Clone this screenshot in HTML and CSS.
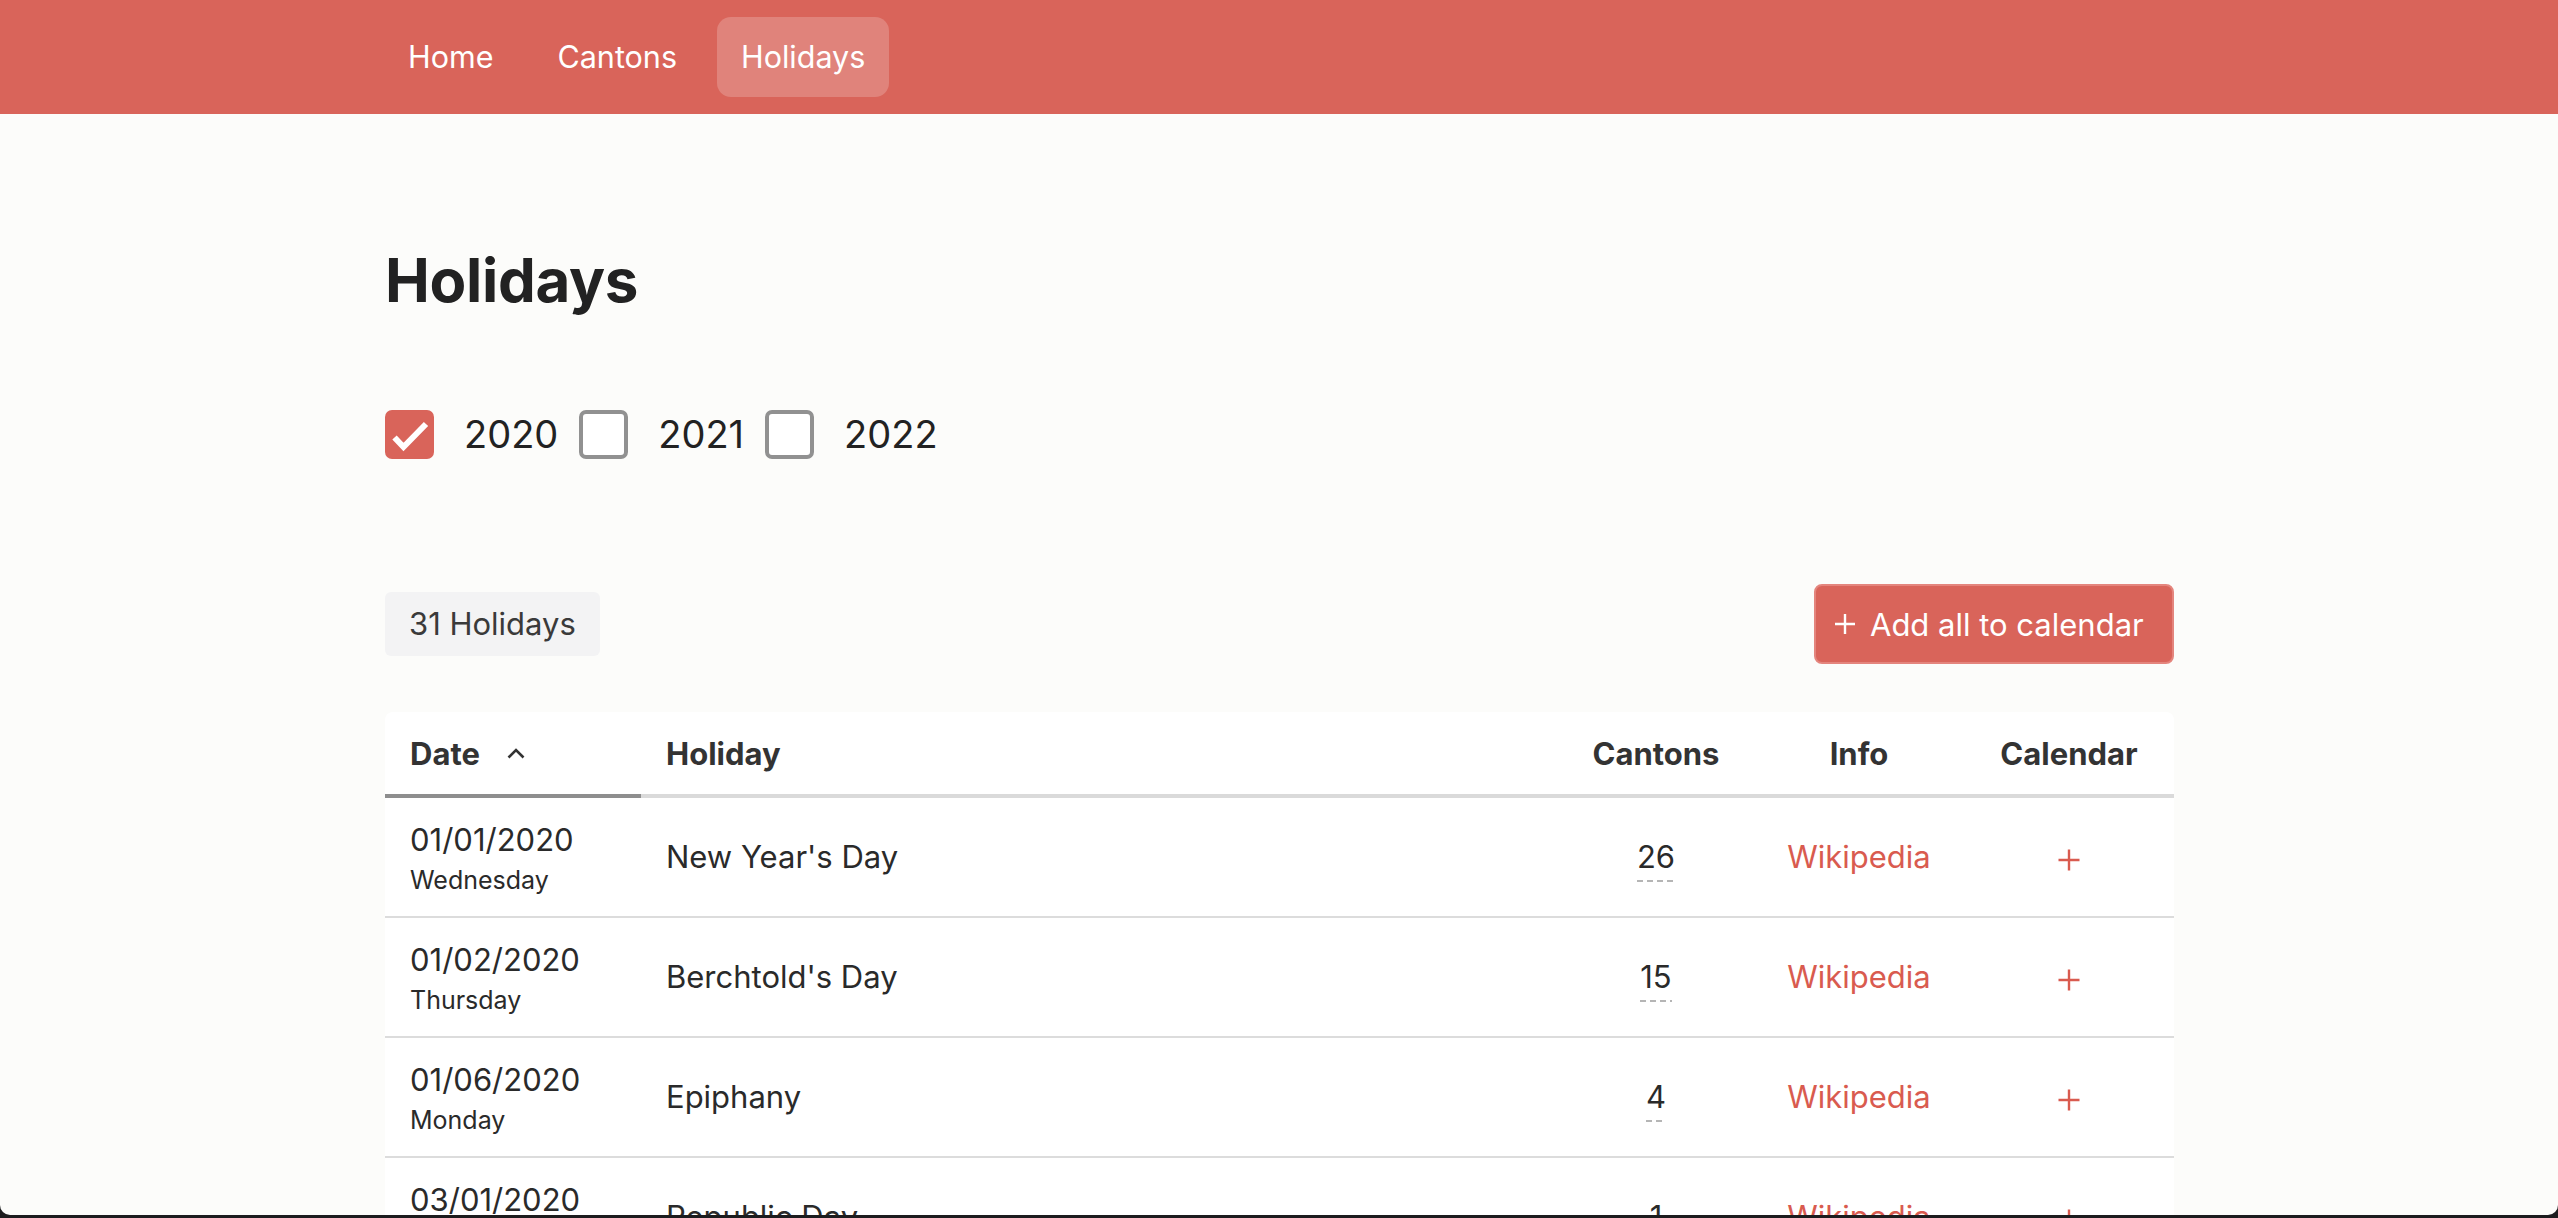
FILE: index.html
```html
<!DOCTYPE html>
<html lang="en">
<head>
<meta charset="utf-8">
<title>Holidays</title>
<link rel="stylesheet" href="styles.css">
</head>
<body>
<header class="navbar">
  <nav class="container nav-inner">
    <a class="nav-link" href="#">Home</a>
    <a class="nav-link" href="#">Cantons</a>
    <a class="nav-link active" href="#">Holidays</a>
  </nav>
</header>

<main class="container main">
  <h1 class="title">Holidays</h1>

  <div class="years">
    <label class="year">
      <span class="box checked">
        <svg width="49" height="49" viewBox="0 0 49 49"><path d="M9.5 27.5 L18.5 37 L41 14" fill="none" stroke="#fff" stroke-width="6"/></svg>
      </span>
      <span class="year-text">2020</span>
    </label>
    <label class="year">
      <span class="box"></span>
      <span class="year-text">2021</span>
    </label>
    <label class="year">
      <span class="box"></span>
      <span class="year-text">2022</span>
    </label>
  </div>

  <div class="toolbar">
    <span class="badge">31 Holidays</span>
    <button class="btn-add" type="button">
      <svg class="btn-plus" width="22" height="22" viewBox="0 0 22 22"><path d="M11 1 V21 M1 11 H21" stroke="#fff" stroke-width="2.4"/></svg>
      <span>Add all to calendar</span>
    </button>
  </div>

  <div class="card">
    <table class="table">
      <colgroup>
        <col class="c-date">
        <col class="c-name">
        <col class="c-cantons">
        <col class="c-info">
        <col class="c-cal">
      </colgroup>
      <thead>
        <tr>
          <th class="th-date sorted">Date <svg class="chev" width="18" height="11" viewBox="0 0 18 11"><polyline points="1.5,9.5 9,2 16.5,9.5" fill="none" stroke="#333" stroke-width="2.6"/></svg></th>
          <th>Holiday</th>
          <th class="center">Cantons</th>
          <th class="center">Info</th>
          <th class="center">Calendar</th>
        </tr>
      </thead>
      <tbody>
        <tr>
          <td><div class="date"><div class="d">01/01/2020</div><div class="wd">Wednesday</div></div></td>
          <td>New Year's Day</td>
          <td class="center"><span class="count">26</span></td>
          <td class="center"><a class="wiki" href="#">Wikipedia</a></td>
          <td class="center"><svg class="plus" width="22" height="22" viewBox="0 0 22 22"><path d="M11 0.5 V21.5 M0.5 11 H21.5" stroke="#d95b4f" stroke-width="2.4"/></svg></td>
        </tr>
        <tr>
          <td><div class="date"><div class="d">01/02/2020</div><div class="wd">Thursday</div></div></td>
          <td>Berchtold's Day</td>
          <td class="center"><span class="count">15</span></td>
          <td class="center"><a class="wiki" href="#">Wikipedia</a></td>
          <td class="center"><svg class="plus" width="22" height="22" viewBox="0 0 22 22"><path d="M11 0.5 V21.5 M0.5 11 H21.5" stroke="#d95b4f" stroke-width="2.4"/></svg></td>
        </tr>
        <tr>
          <td><div class="date"><div class="d">01/06/2020</div><div class="wd">Monday</div></div></td>
          <td>Epiphany</td>
          <td class="center"><span class="count">4</span></td>
          <td class="center"><a class="wiki" href="#">Wikipedia</a></td>
          <td class="center"><svg class="plus" width="22" height="22" viewBox="0 0 22 22"><path d="M11 0.5 V21.5 M0.5 11 H21.5" stroke="#d95b4f" stroke-width="2.4"/></svg></td>
        </tr>
        <tr>
          <td><div class="date"><div class="d">03/01/2020</div><div class="wd">Sunday</div></div></td>
          <td>Republic Day</td>
          <td class="center"><span class="count">1</span></td>
          <td class="center"><a class="wiki" href="#">Wikipedia</a></td>
          <td class="center"><svg class="plus" width="22" height="22" viewBox="0 0 22 22"><path d="M11 0.5 V21.5 M0.5 11 H21.5" stroke="#d95b4f" stroke-width="2.4"/></svg></td>
        </tr>
        <tr>
          <td><div class="date"><div class="d">03/19/2020</div><div class="wd">Thursday</div></div></td>
          <td>Saint Joseph's Day</td>
          <td class="center"><span class="count">5</span></td>
          <td class="center"><a class="wiki" href="#">Wikipedia</a></td>
          <td class="center"><svg class="plus" width="22" height="22" viewBox="0 0 22 22"><path d="M11 0.5 V21.5 M0.5 11 H21.5" stroke="#d95b4f" stroke-width="2.4"/></svg></td>
        </tr>
      </tbody>
    </table>
  </div>
</main>

<div class="frame"></div>
</body>
</html>
```

FILE: styles.css
```css
* { box-sizing: border-box; }

html, body {
  margin: 0;
  padding: 0;
}

body {
  background: #fcfcfa;
  color: #262626;
  font-family: Inter, "Noto Sans", "Liberation Sans", sans-serif;
  font-size: 31px;
}

.container {
  width: 1790px;
  margin: 0 auto;
}

.main {
  padding-left: 1px;
}

/* Navbar */
.navbar {
  background: #d9645a;
  height: 114px;
}

.nav-inner {
  display: flex;
  align-items: center;
  gap: 16px;
  height: 114px;
}

.nav-link {
  display: block;
  height: 80px;
  line-height: 80px;
  padding: 0 24px;
  border-radius: 14px;
  color: #fff;
  text-decoration: none;
  font-size: 30.5px;
}

.nav-link.active {
  background: rgba(255, 255, 255, 0.2);
}

/* Title */
.title {
  margin: 130px 0 94px;
  font-size: 60px;
  line-height: 72px;
  font-weight: 700;
  color: #222;
  letter-spacing: -0.3px;
}

/* Years */
.years {
  display: flex;
  align-items: center;
  gap: 21px;
  height: 49px;
}

.year {
  display: flex;
  align-items: center;
}

.box {
  display: block;
  width: 49px;
  height: 49px;
  border: 4px solid #919191;
  border-radius: 7px;
  background: #fff;
}

.box.checked {
  border: none;
  background: #d9645a;
}

.box svg { display: block; }

.year-text {
  margin-left: 30px;
  font-size: 38px;
  line-height: 49px;
  color: #222;
}

/* Toolbar */
.toolbar {
  margin-top: 125px;
  display: flex;
  align-items: center;
  justify-content: space-between;
  height: 80px;
}

.badge {
  display: block;
  height: 64px;
  line-height: 64px;
  padding: 0 24px;
  background: #f3f3f4;
  border-radius: 6px;
  color: #3a3a3a;
  font-size: 31px;
}

.btn-add {
  display: flex;
  align-items: center;
  width: 360px;
  height: 80px;
  padding: 0 0 0 18px;
  background: #d9645a;
  border: 2px solid #e4857d;
  border-radius: 8px;
  color: #fff;
  font-family: inherit;
  font-size: 31px;
}

.btn-plus {
  display: block;
  margin-right: 14px;
}

/* Table */
.card {
  margin-top: 48px;
  background: #fff;
  border-radius: 8px;
  overflow: hidden;
}

.table {
  width: 100%;
  table-layout: fixed;
  border-collapse: separate;
  border-spacing: 0;
}

.c-date { width: 256px; }
.c-cantons { width: 196px; }
.c-info { width: 210px; }
.c-cal { width: 210px; }

.table th {
  height: 86px;
  padding: 0 25px;
  text-align: left;
  font-weight: 700;
  color: #333;
  font-size: 31px;
  border-bottom: 4px solid #dadada;
  vertical-align: middle;
  white-space: nowrap;
}

.table th.sorted {
  border-bottom-color: #8e8e8e;
}

.chev {
  margin-left: 20px;
  vertical-align: 6px;
}

.table td {
  height: 120px;
  padding: 0 25px;
  border-bottom: 2px solid #dcdcdc;
  vertical-align: middle;
  font-size: 31px;
  line-height: 40px;
  color: #2a2a2a;
  white-space: nowrap;
}

.table .center { text-align: center; }

.date {
  padding-top: 6px;
}

.date .d {
  font-size: 31px;
  line-height: 40px;
}

.date .wd {
  font-size: 25px;
  line-height: 40px;
}

.count {
  display: inline-block;
  line-height: 40px;
  background-image: repeating-linear-gradient(to right, #b5b5b5 0 6px, transparent 6px 10px);
  background-size: 100% 2px;
  background-repeat: no-repeat;
  background-position: left bottom;
  padding-bottom: 5px;
  margin-bottom: -5px;
}

.wiki {
  color: #d95b4f;
  text-decoration: none;
}

.plus {
  display: inline-block;
  vertical-align: middle;
}

/* Window frame at the bottom edge of the screenshot */
.frame {
  position: fixed;
  top: 0;
  left: 0;
  right: 0;
  bottom: 3px;
  border-radius: 0 0 10px 10px;
  box-shadow: 0 0 0 40px #1c1c1e;
  pointer-events: none;
  z-index: 10;
}
```
